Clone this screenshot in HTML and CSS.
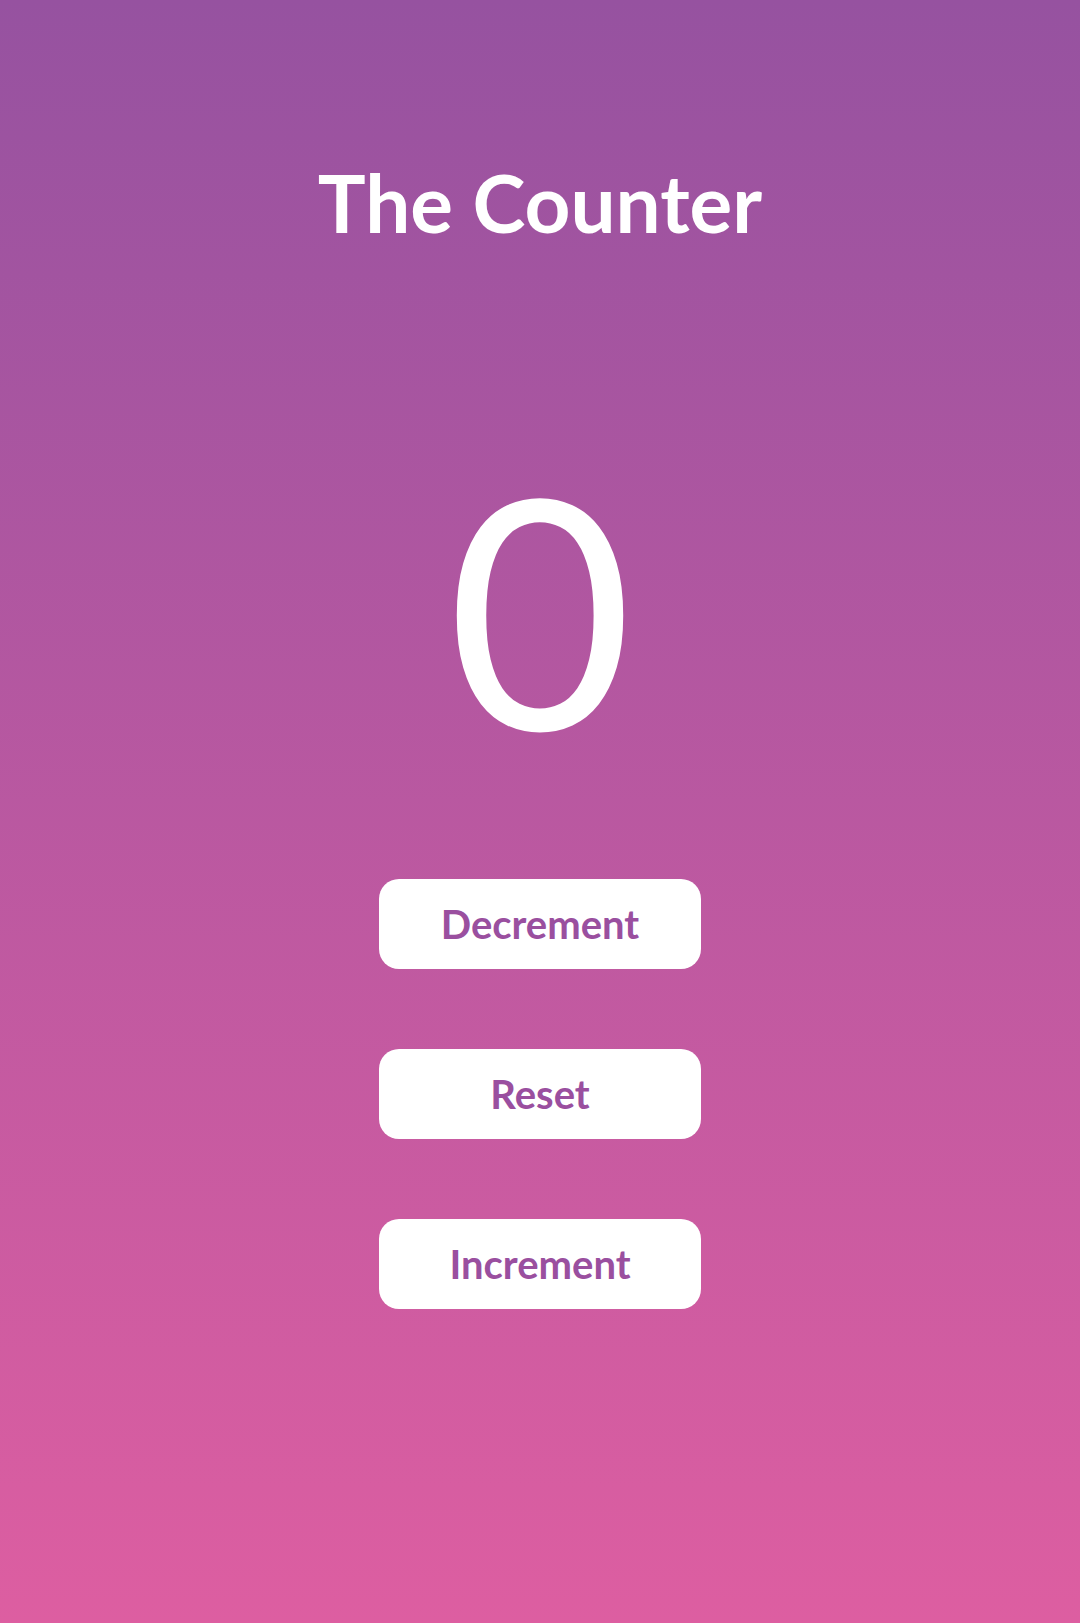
FILE: index.html
```html
<!DOCTYPE html>
<html lang="en">
<head>
<meta charset="utf-8">
<title>The Counter</title>
<link rel="stylesheet" href="styles.css">
</head>
<body>
<main class="app">
  <h1 class="title">The Counter</h1>
  <div class="count">0</div>
  <div class="actions">
    <button class="btn">Decrement</button>
    <button class="btn">Reset</button>
    <button class="btn">Increment</button>
  </div>
</main>
</body>
</html>
```
FILE: styles.css
```css
html, body {
  margin: 0;
  padding: 0;
}
body {
  min-height: 1623px;
  background: linear-gradient(to bottom, #9652a0 0%, #dd5ea1 100%);
  font-family: Lato, "Open Sans", sans-serif;
  color: #fff;
}
.app {
  display: flex;
  flex-direction: column;
  align-items: center;
  padding-top: 162px;
}
.title {
  margin: 0;
  font-size: 80px;
  line-height: 1;
  font-weight: 700;
}
.count {
  margin-top: 204px;
  font-size: 320px;
  line-height: 1;
  font-weight: 400;
}
.actions {
  margin-top: 113px;
  display: flex;
  flex-direction: column;
  gap: 80px;
}
.btn {
  width: 322px;
  height: 90px;
  border: none;
  border-radius: 20px;
  background: #fff;
  color: #9a4f9f;
  font-family: Lato, "Open Sans", sans-serif;
  font-weight: 700;
  font-size: 40px;
  padding: 0;
}
```
